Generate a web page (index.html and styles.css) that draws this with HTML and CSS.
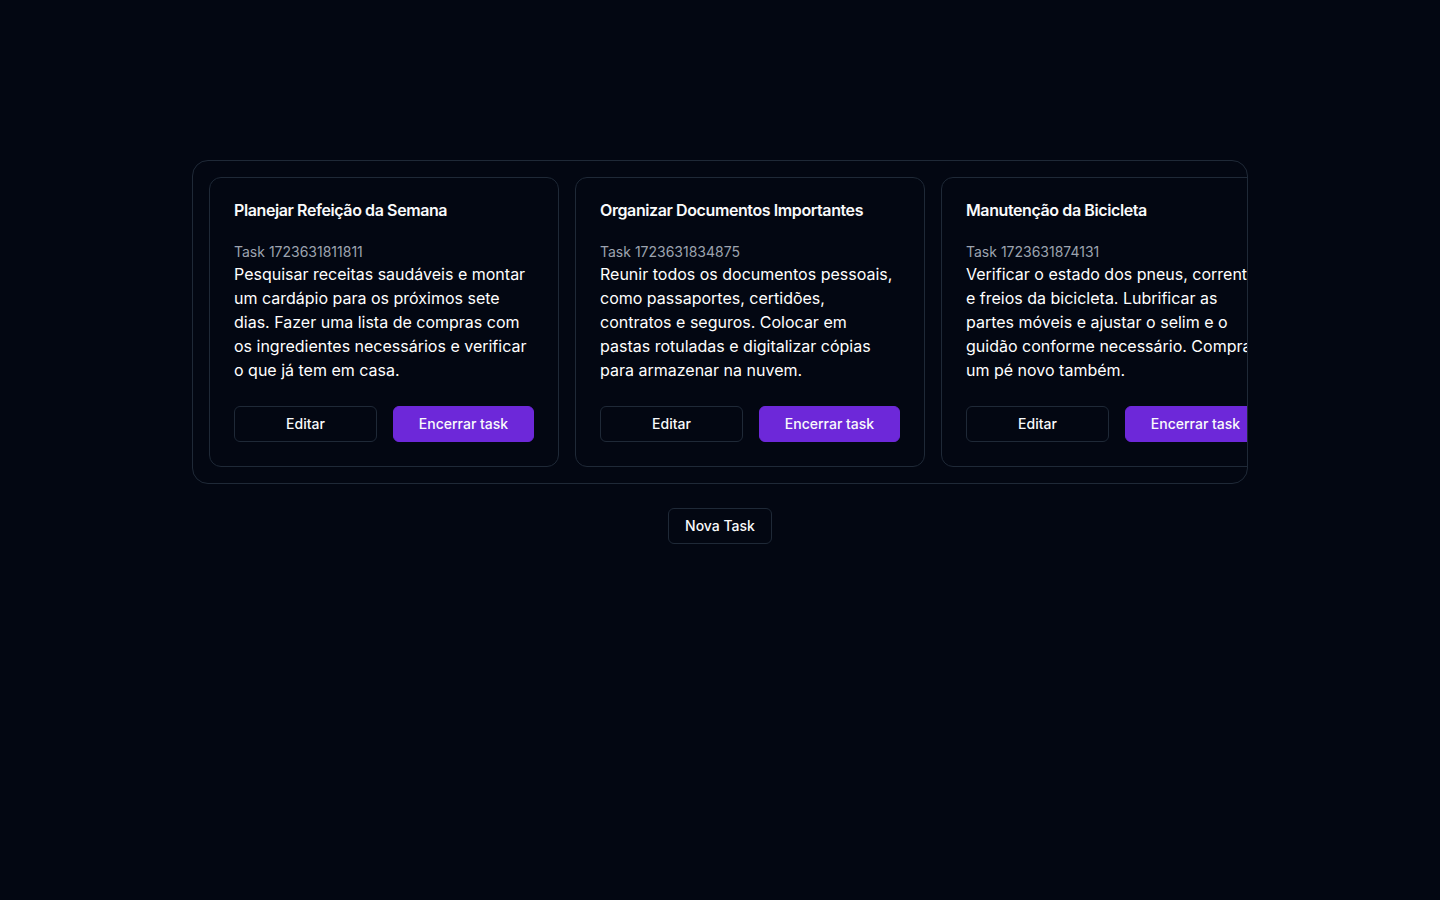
FILE: index.html
```html
<!DOCTYPE html>
<html lang="pt-BR">
<head>
<meta charset="utf-8">
<title>Tasks</title>
<link rel="stylesheet" href="styles.css">
</head>
<body>
<main class="page">
  <section class="board">
    <article class="card">
      <h3 class="card-title">Planejar Refeição da Semana</h3>
      <div class="card-content">
        <p class="task-id">Task 1723631811811</p>
        <p class="task-desc">Pesquisar receitas saudáveis e montar um cardápio para os próximos sete dias. Fazer uma lista de compras com os ingredientes necessários e verificar o que já tem em casa.</p>
      </div>
      <div class="card-footer">
        <button class="btn btn-outline">Editar</button>
        <button class="btn btn-primary">Encerrar task</button>
      </div>
    </article>
    <article class="card">
      <h3 class="card-title">Organizar Documentos Importantes</h3>
      <div class="card-content">
        <p class="task-id">Task 1723631834875</p>
        <p class="task-desc">Reunir todos os documentos pessoais, como passaportes, certidões, contratos e seguros. Colocar em pastas rotuladas e digitalizar cópias para armazenar na nuvem.</p>
      </div>
      <div class="card-footer">
        <button class="btn btn-outline">Editar</button>
        <button class="btn btn-primary">Encerrar task</button>
      </div>
    </article>
    <article class="card">
      <h3 class="card-title">Manutenção da Bicicleta</h3>
      <div class="card-content">
        <p class="task-id">Task 1723631874131</p>
        <p class="task-desc">Verificar o estado dos pneus, corrente e freios da bicicleta. Lubrificar as partes móveis e ajustar o selim e o guidão conforme necessário. Comprar um pé novo também.</p>
      </div>
      <div class="card-footer">
        <button class="btn btn-outline">Editar</button>
        <button class="btn btn-primary">Encerrar task</button>
      </div>
    </article>
  </section>
  <button class="btn btn-outline btn-new">Nova Task</button>
</main>
</body>
</html>
```
FILE: styles.css
```css
* { box-sizing: border-box; }
html, body { margin: 0; padding: 0; }
body {
  background: #030712;
  color: #f9fafb;
  font-family: Inter, "Noto Sans", sans-serif;
  min-height: 100vh;
}
.page {
  padding-top: 160px;
  display: flex;
  flex-direction: column;
  align-items: center;
  gap: 24px;
}
.board {
  width: 1056px;
  border: 1px solid #1f2937;
  border-radius: 16px;
  padding: 16px;
  display: flex;
  gap: 16px;
  overflow: hidden;
}
.card {
  flex: 0 0 350px;
  width: 350px;
  border: 1px solid #1f2937;
  border-radius: 12px;
  background: #030712;
  padding: 24px;
  display: flex;
  flex-direction: column;
}
.card-title {
  margin: 0 0 24px;
  font-size: 16px;
  line-height: 16px;
  font-weight: 600;
  letter-spacing: -0.4px;
  color: #f9fafb;
}
.card-content { margin-bottom: 24px; }
.task-id {
  margin: 0;
  font-size: 14px;
  line-height: 20px;
  color: #9ca3af;
}
.task-desc {
  margin: 0;
  font-size: 16px;
  line-height: 24px;
  font-weight: 400;
  color: #ffffff;
}
.card-footer {
  display: flex;
  gap: 16px;
}
.btn {
  height: 36px;
  border-radius: 6px;
  font-family: inherit;
  font-size: 14px;
  line-height: 20px;
  font-weight: 500;
  color: #f9fafb;
  cursor: pointer;
  padding: 0 16px 1px;
}
.card-footer .btn { flex: 1 1 34px; }
.card-footer .btn-outline { flex-basis: 36px; }
.btn-outline {
  background: #030712;
  border: 1px solid #1f2937;
}
.btn-primary {
  background: #6d28d9;
  border: 1px solid #6d28d9;
}
.btn-new { width: 104px; }
```
